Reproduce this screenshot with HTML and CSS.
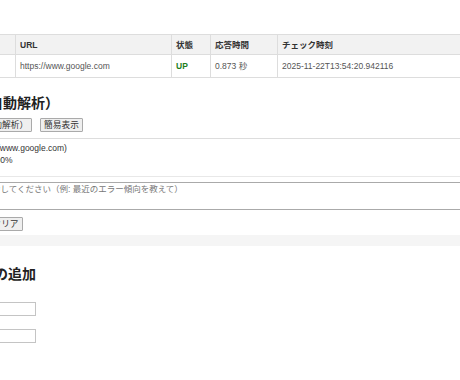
FILE: index.html
```html
<!DOCTYPE html>
<html lang="ja">
<head>
    <meta charset="UTF-8">
    <meta name="viewport" content="width=device-width, initial-scale=1.0">
    <title>サイト監視ダッシュボード</title>
    <link rel="stylesheet" href="styles.css">
</head>
<body>

    <main class="page">
        <section class="panel">
            <table class="status">
                <colgroup>
                    <col class="col-name">
                    <col class="col-url">
                    <col class="col-state">
                    <col class="col-time">
                    <col class="col-checked">
                </colgroup>
                <thead>
                    <tr>
                        <th>サイト名</th>
                        <th>URL</th>
                        <th>状態</th>
                        <th>応答時間</th>
                        <th>チェック時刻</th>
                    </tr>
                </thead>
                <tbody>
                    <tr>
                        <td>Google</td>
                        <td>https://www.google.com</td>
                        <td class="up">UP</td>
                        <td>0.873 秒</td>
                        <td>2025-11-22T13:54:20.942116</td>
                    </tr>
                </tbody>
            </table>

            <h2>AI 分析（自動解析）</h2>
            <div class="actions">
                <button class="btn">AI詳細表示（自動解析）</button>
                <button class="btn">簡易表示</button>
            </div>

            <div class="result">
                <p>対象サイト(https://www.google.com)</p>
                <p>直近の稼働率： 100%</p>
            </div>

            <textarea class="ask" placeholder="AIへの質問を入力してください（例: 最近のエラー傾向を教えて）"></textarea>
            <div class="actions bottom">
                <button class="btn">質問を送信</button>
                <button class="btn">クリア</button>
            </div>
        </section>

        <section class="panel add">
            <h2>監視対象の追加</h2>
            <form class="add-form">
                <div class="field">
                    <label for="site-name">名前:</label>
                    <input type="text" id="site-name">
                </div>
                <div class="field">
                    <label for="site-url">URL:</label>
                    <input type="text" id="site-url">
                </div>
            </form>
        </section>
    </main>

</body>
</html>
```

FILE: styles.css
```css
html,
body {
    margin: 0;
    overflow: hidden;
}
body {
    font-family: "Liberation Sans", "Noto Sans CJK JP", sans-serif;
    font-size: 8.5px;
    color: #333;
    background-color: #f5f5f5;
}
.page {
    width: 620px;
    margin-left: -85px;
}
.panel {
    background-color: #fff;
    padding: 34px 14px 4px;
}
.panel.add {
    margin-top: 11px;
    padding: 18px 23px 40px;
}
.status {
    border-collapse: collapse;
    table-layout: fixed;
    width: 568px;
}
.col-name { width: 86px; }
.col-url { width: 156px; }
.col-state { width: 39px; }
.col-time { width: 67px; }
.col-checked { width: 220px; }
.status th,
.status td {
    border: 1px solid #ddd;
    text-align: left;
    padding: 0 4px;
    line-height: 10px;
    white-space: nowrap;
    overflow: hidden;
}
.status th {
    height: 19px;
    background-color: #f2f2f2;
    color: #333;
}
.status td {
    height: 22px;
    color: #555;
}
.status td.up {
    color: #1e7f1e;
    font-weight: bold;
}
h2 {
    font-size: 14px;
    line-height: 20px;
    margin: 15px 0 5px;
    color: #222;
}
.actions {
    display: flex;
    gap: 8px;
}
.actions.bottom {
    margin-top: 7px;
}
.btn {
    font-family: inherit;
    font-size: 8.7px;
    line-height: 12px;
    padding: 0 3px;
    border: 1px solid #aaa;
    border-radius: 1px;
    background-color: #efefef;
    color: #333;
}
.result {
    margin-top: 6px;
    padding: 3px 0 10px;
    border-top: 1px solid #ddd;
    border-bottom: 1px solid #e8e8e8;
}
.result p {
    margin: 0;
    line-height: 12px;
}
.ask {
    display: block;
    box-sizing: border-box;
    width: 100%;
    height: 28px;
    margin-top: 5px;
    padding: 1px 3px;
    font-family: inherit;
    font-size: 8.5px;
    line-height: 10px;
    border: 1px solid #aaa;
    resize: none;
}
.ask::placeholder {
    color: #777;
}
.panel.add h2 {
    margin: 0 0 18px;
}
.add-form {
    display: flex;
    flex-direction: column;
    gap: 13px;
}
.field {
    display: flex;
    align-items: center;
    gap: 4px;
}
.field label {
    width: 40px;
}
.field input {
    box-sizing: border-box;
    width: 54px;
    height: 14px;
    padding: 0 2px;
    font-size: 8.5px;
    border: 1px solid #c4c4c4;
}
```
